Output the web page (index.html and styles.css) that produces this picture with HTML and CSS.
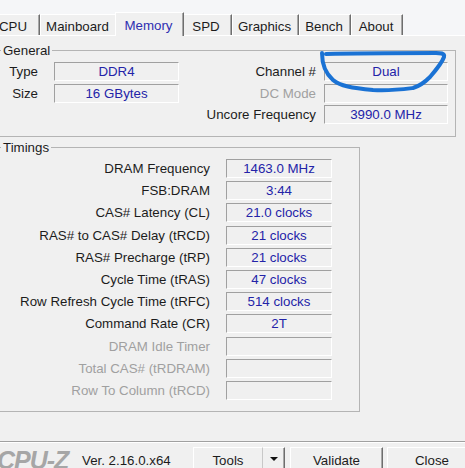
FILE: index.html
```html
<!DOCTYPE html>
<html lang="en">
<head>
    <meta charset="UTF-8">
    <title>CPU-Z Memory</title>
    <link rel="stylesheet" href="styles.css">
</head>
<body>
    <div class="tabbar">
        <div class="tab tab-cpu">CPU</div>
        <div class="tab tab-mainboard">Mainboard</div>
        <div class="tab tab-memory active">Memory</div>
        <div class="tab tab-spd">SPD</div>
        <div class="tab tab-graphics">Graphics</div>
        <div class="tab tab-bench">Bench</div>
        <div class="tab tab-about">About</div>
    </div>

    <div class="panel">
        <fieldset class="group group-general">
            <legend>General</legend>
            <div class="general-grid">
                <span class="lbl lbl-left">Type</span>
                <span class="box">DDR4</span>
                <span class="lbl lbl-right">Channel #</span>
                <span class="box">Dual</span>

                <span class="lbl lbl-left">Size</span>
                <span class="box">16 GBytes</span>
                <span class="lbl lbl-right disabled">DC Mode</span>
                <span class="box"></span>

                <span></span>
                <span></span>
                <span class="lbl lbl-right">Uncore Frequency</span>
                <span class="box">3990.0 MHz</span>
            </div>
        </fieldset>

        <fieldset class="group group-timings">
            <legend>Timings</legend>
            <div class="timings-grid">
                <span class="lbl">DRAM Frequency</span><span class="box">1463.0 MHz</span>
                <span class="lbl">FSB:DRAM</span><span class="box">3:44</span>
                <span class="lbl">CAS# Latency (CL)</span><span class="box">21.0 clocks</span>
                <span class="lbl">RAS# to CAS# Delay (tRCD)</span><span class="box">21 clocks</span>
                <span class="lbl">RAS# Precharge (tRP)</span><span class="box">21 clocks</span>
                <span class="lbl">Cycle Time (tRAS)</span><span class="box">47 clocks</span>
                <span class="lbl">Row Refresh Cycle Time (tRFC)</span><span class="box">514 clocks</span>
                <span class="lbl">Command Rate (CR)</span><span class="box">2T</span>
                <span class="lbl disabled">DRAM Idle Timer</span><span class="box"></span>
                <span class="lbl disabled">Total CAS# (tRDRAM)</span><span class="box"></span>
                <span class="lbl disabled">Row To Column (tRCD)</span><span class="box"></span>
            </div>
        </fieldset>
    </div>

    <div class="footer">
        <span class="logo">CPU-Z</span>
        <span class="version">Ver. 2.16.0.x64</span>
        <div class="btn btn-tools">Tools</div>
        <div class="btn btn-arrow"><span class="arrow"></span></div>
        <div class="btn btn-validate">Validate</div>
        <div class="btn btn-close">Close</div>
    </div>

    <!-- pen mark drawn over the channel field -->
    <svg class="markup" width="465" height="468" viewBox="0 0 465 468">
        <path d="M322 53 C322 62, 324 72, 333 80 C340 86, 352 88, 373 90 C390 91, 405 89, 413 88 C420 86, 426 81, 430 77 C436 70, 442 63, 444 57 C445 53, 440 53, 436 53 C400 53, 360 53, 326 54"
              fill="none" stroke="#1a72d4" stroke-width="4" stroke-linecap="round" stroke-linejoin="round"/>
    </svg>
</body>
</html>
```

FILE: styles.css
```css
body {
    margin: 0;
    width: 465px;
    height: 468px;
    overflow: hidden;
    background: #f0f0f0;
    font-family: "Liberation Sans", Arial, sans-serif;
    font-size: 13.3px;
    color: #1c1c1c;
    position: relative;
}
.tabbar {
    display: flex;
    align-items: flex-end;
    height: 35px;
    background: #f5f6f8;
}
.tab {
    box-sizing: border-box;
    height: 21px;
    display: flex;
    align-items: center;
    justify-content: center;
    padding: 3px 2px 0 0;
    background: #f0f0f0;
    border-top: 1px solid #fff;
    border-left: 1px solid #fff;
    border-right: 1px solid #6e6e6e;
    box-shadow: inset -1px 0 0 #a8a8a8;
    flex: none;
}
.tab-cpu { width: 52px; margin-left: -12px; }
.tab-mainboard { width: 77px; }
.tab-memory { width: 69px; margin: 0 -2px -1px -2px; }
.tab-spd { width: 50px; }
.tab-graphics { width: 67px; }
.tab-bench { width: 52px; }
.tab-about { width: 52px; }
.tab.active {
    height: 24px;
    padding-top: 1px;
    color: #2e2eb0;
    position: relative;
    z-index: 1;
}
.panel {
    box-sizing: border-box;
    height: 406px;
    border-top: 1px solid #fff;
}
.group {
    box-sizing: border-box;
    margin: 0 0 0 -4px;
    padding: 0;
    border: 1px solid #b4b4b4;
    min-width: 0;
}
.group legend {
    margin-left: 4px;
    padding: 0 2px;
    line-height: 15px;
}
.group-general {
    width: 460px;
    margin-top: 7px;
    padding: 4px 0 12px 0;
}
.group-timings {
    width: 364px;
    margin-top: 3px;
    padding: 4px 0 11px 0;
}
.general-grid {
    display: grid;
    grid-template-columns: 57px 125px 145px 124px;
    grid-auto-rows: 19px;
    row-gap: 2.5px;
}
.timings-grid {
    display: grid;
    grid-template-columns: 229px 106px;
    grid-auto-rows: 19px;
    row-gap: 3.2px;
}
.lbl {
    text-align: right;
    line-height: 19px;
    white-space: nowrap;
    padding-right: 16px;
}
.general-grid .lbl-right {
    padding-right: 8px;
}
.disabled {
    color: #a0a0a0;
}
.box {
    box-sizing: border-box;
    border-top: 1px solid #a0a0a0;
    border-left: 1px solid #a0a0a0;
    border-bottom: 1px solid #fff;
    border-right: 1px solid #fff;
    text-align: center;
    line-height: 17px;
    color: #2323a8;
    white-space: nowrap;
}
.footer {
    display: flex;
    align-items: flex-start;
    border-top: 1px solid #a0a0a0;
    box-shadow: inset 0 1px 0 #fff;
    padding-top: 5px;
}
.logo {
    margin: 2px 0 0 -3px;
    font-weight: bold;
    font-style: italic;
    font-size: 25px;
    line-height: 22px;
    letter-spacing: -1px;
    color: #a6a6a6;
    width: 85px;
    flex: none;
}
.version {
    margin-top: 6px;
    width: 111px;
    flex: none;
}
.btn {
    box-sizing: border-box;
    height: 25px;
    display: flex;
    align-items: center;
    justify-content: center;
    background: #f0f0f0;
    border-top: 1px solid #fff;
    border-left: 1px solid #fff;
    border-right: 1px solid #6e6e6e;
    box-shadow: inset -1px 0 0 #a8a8a8;
    flex: none;
}
.btn-tools { width: 70px; border-right: 1px solid #c8c8c8; box-shadow: none; }
.btn-arrow { width: 22px; border-left: none; }
.btn-validate { width: 93px; margin-left: 5px; }
.btn-close { width: 90px; margin-left: 4px; }
.arrow {
    width: 0;
    height: 0;
    border-left: 4px solid transparent;
    border-right: 4px solid transparent;
    border-top: 4px solid #111;
    margin-bottom: 2px;
}
.markup {
    position: absolute;
    left: 0;
    top: 0;
    pointer-events: none;
}
```
